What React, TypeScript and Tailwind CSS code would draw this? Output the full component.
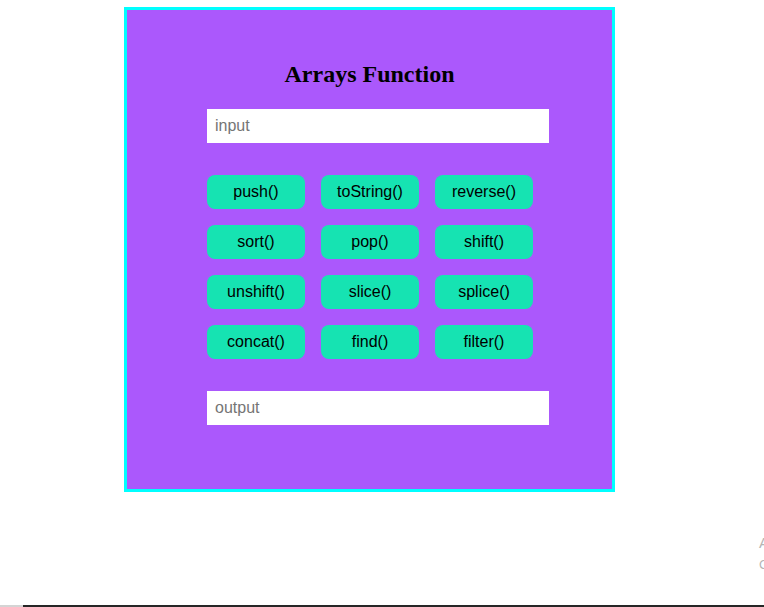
import type { JSX } from 'react'

const methods = [
  'push()',
  'toString()',
  'reverse()',
  'sort()',
  'pop()',
  'shift()',
  'unshift()',
  'slice()',
  'splice()',
  'concat()',
  'find()',
  'filter()'
]

function MethodButton(props: { label: string }): JSX.Element {
  return (
    <button
      type="button"
      className="h-[34px] w-[98px] rounded-lg bg-[#16e3b2] text-[16px] text-black"
    >
      {props.label}
    </button>
  )
}

export default function App(): JSX.Element {
  return (
    <div
      className="relative flex h-[607px] w-[764px] flex-col overflow-hidden bg-white"
      style={{ fontFamily: '"Liberation Sans", Arial, sans-serif' }}
    >
      <div className="flex-1 pl-[124px] pt-[7px]">
        <div className="flex h-[485px] w-[491px] flex-col border-[3px] border-[#00ffff] bg-[#ab58fc] pl-[80px]">
          <h2
            className="mt-[50px] -ml-[80px] text-center text-[24px] font-bold leading-[28px] text-black"
            style={{ fontFamily: '"Liberation Serif", "Times New Roman", serif' }}
          >
            Arrays Function
          </h2>
          <input
            type="text"
            placeholder="input"
            className="mt-[21px] h-[34px] w-[342px] bg-white px-2 text-[16px] text-black outline-none placeholder:text-[#757575]"
          />
          <div className="mt-8 grid w-[342px] grid-cols-[98px_98px_98px] gap-4">
            {methods.map((m) => (
              <MethodButton key={m} label={m} />
            ))}
          </div>
          <input
            type="text"
            placeholder="output"
            className="mt-8 h-[34px] w-[342px] bg-white px-2 text-[16px] text-black outline-none placeholder:text-[#757575]"
          />
        </div>
      </div>

      <div className="absolute left-[759px] top-[532px] text-[15px] leading-[22px] whitespace-nowrap text-[#b5b5b5]">
        <div>Activate Windows</div>
        <div className="text-[13px]">Go to Settings to activate Windows.</div>
      </div>

      <div className="flex h-[2px]">
        <div className="w-[23px] bg-[#d4d4d4]" />
        <div className="flex-1 bg-[#262626]" />
      </div>
    </div>
  )
}
